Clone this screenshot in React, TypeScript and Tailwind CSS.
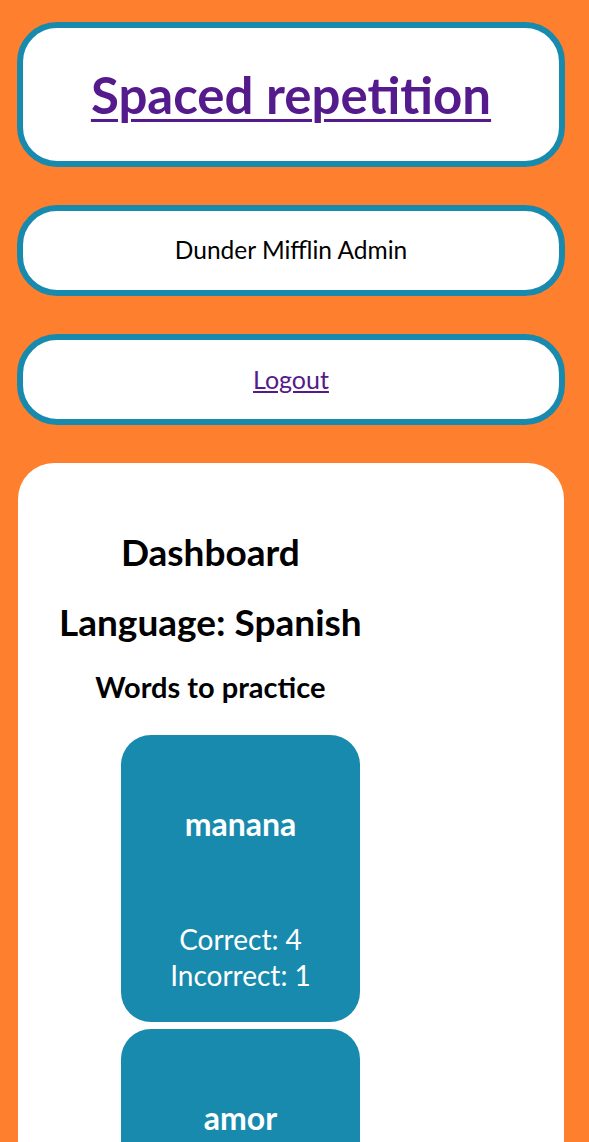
const words = [
  { original: "manana", correct: 4, incorrect: 1 },
  { original: "amor", correct: 0, incorrect: 0 },
];

function Box({ children, className }: { children: React.ReactNode; className?: string }) {
  return (
    <div
      className={`border-[6px] border-[#188aad] bg-white rounded-[40px] flex items-center justify-center ${className ?? ""}`}
    >
      {children}
    </div>
  );
}

export default function App() {
  return (
    <div className="min-h-[1142px] bg-[#fe7f2e] pl-[17px] pr-[24px] pt-[22px] pb-10 font-['Lato',sans-serif]">
      <header className="flex flex-col gap-[38px]">
        <Box className="h-[145px]">
          <h1 className="text-[51px] font-bold leading-none">
            <a href="#" className="text-[#551a8b] underline decoration-[3px] underline-offset-[5px]">
              Spaced repetition
            </a>
          </h1>
        </Box>
        <Box className="h-[91px]">
          <span className="text-[24.5px] text-black">Dunder Mifflin Admin</span>
        </Box>
        <Box className="h-[91px]">
          <a href="#" className="text-[25px] text-[#551a8b] underline">
            Logout
          </a>
        </Box>
      </header>

      <main className="mt-[38px] mx-px bg-white rounded-t-[36px] min-h-[700px] pt-[66px] pl-[41px]">
        <div className="w-fit flex flex-col items-center text-black">
          <h2 className="text-[37px] font-bold leading-tight">Dashboard</h2>
          <h2 className="mt-[24px] text-[37px] font-bold leading-tight">Language: Spanish</h2>
          <h3 className="mt-[23px] text-[29px] font-bold leading-tight">Words to practice</h3>
        </div>
        <ul className="mt-[30px] ml-[62px] flex flex-col gap-[7px]">
          {words.map((w) => (
            <li
              key={w.original}
              className="w-[239px] h-[287px] bg-[#188aad] rounded-[30px] text-white flex flex-col items-center pt-[73px]"
            >
              <h4 className="text-[32px] font-bold leading-none">{w.original}</h4>
              <div className="mt-auto mb-[29px] text-center text-[28px] leading-[36px]">
                <p>Correct: {w.correct}</p>
                <p>Incorrect: {w.incorrect}</p>
              </div>
            </li>
          ))}
        </ul>
      </main>
    </div>
  );
}
